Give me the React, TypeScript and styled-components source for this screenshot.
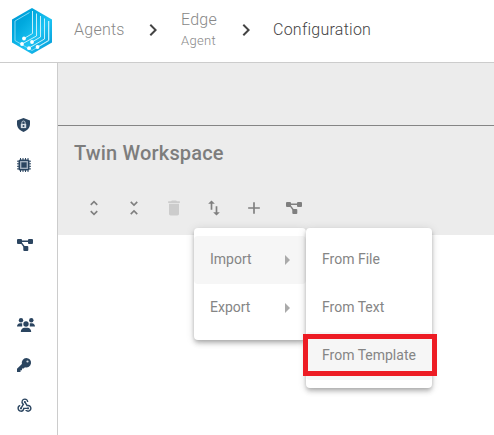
import React from "react";
import styled, { createGlobalStyle, css } from "styled-components";
import { MdAdd, MdDelete, MdImportExport, MdUnfoldLess, MdUnfoldMore, MdChevronRight, MdWebhook } from "react-icons/md";

const GlobalStyle = createGlobalStyle`
  *, *::after { box-sizing: border-box; }
  body { margin: 0; background: #fff; font-family: Roboto, sans-serif; overflow: hidden; }
  svg { display: block; flex: none; }
`;

const Page = styled.div`
  height: 435px;
  display: flex;
  flex-direction: column;
`;

const Header = styled.header`
  height: 63px;
  flex: none;
  display: flex;
  align-items: center;
  padding-left: 11px;
  border-bottom: 1px solid #ccc;
`;

const Crumb = styled.div<{ $width: number; $active?: boolean }>`
  width: ${(p) => p.$width}px;
  flex: none;
  font-size: 16px;
  font-weight: 300;
  line-height: 20px;
  letter-spacing: 0.25px;
  color: ${(p) => (p.$active ? "#444" : "#888")};
  padding-bottom: 2px;
`;

const CrumbSub = styled.div`
  font-size: 13px;
  line-height: 21px;
  letter-spacing: 0.3px;
  margin-bottom: -1px;
`;

const Separator = styled.div<{ $width: number }>`
  width: ${(p) => p.$width}px;
  padding-bottom: 2px;
  color: #444;
`;

const Logo = styled.svg`
  margin-right: 21px;
`;

const Body = styled.div`
  flex: 1;
  display: flex;
`;

const Sidebar = styled.nav`
  width: 58px;
  flex: none;
  padding-top: 42px;
  border-right: 1px solid #ccc;
  color: #2b4560;
`;

const NavItem = styled.div<{ $gapAfter?: boolean }>`
  height: 40px;
  padding-left: 16px;
  display: flex;
  align-items: center;
  margin-bottom: ${(p) => (p.$gapAfter ? 40 : 0)}px;
`;

const Main = styled.main`
  flex: 1;
  position: relative;
`;

const Banner = styled.div`
  height: 63px;
  background: #ececec;
  border-bottom: 1px solid #858585;
`;

const Workspace = styled.section`
  height: 109px;
  background: #ececec;
  padding: 15px 16px 0;
`;

const Title = styled.h1`
  margin: 0;
  height: 47px;
  font-size: 20px;
  line-height: 24px;
  font-weight: 500;
  letter-spacing: 0.17px;
  color: #7d7d7d;
`;

const Toolbar = styled.div`
  display: flex;
`;

const ToolButton = styled.div<{ $disabled?: boolean }>`
  width: 40px;
  height: 40px;
  display: flex;
  align-items: center;
  justify-content: center;
  color: ${(p) => (p.$disabled ? "#ccc" : "#7f7f7f")};
`;

const Menu = styled.div<{ $level: number }>`
  position: absolute;
  top: 165px;
  left: ${(p) => (p.$level ? 248 : 136)}px;
  width: ${(p) => (p.$level ? 126 : 112)}px;
  padding: 8px 0;
  background: #fff;
  border-radius: 4px;
  box-shadow: 0 2px 4px -1px rgba(0, 0, 0, 0.2), 0 4px 5px rgba(0, 0, 0, 0.14), 0 1px 10px rgba(0, 0, 0, 0.12);
`;

const MenuItem = styled.div<{ $active?: boolean; $marked?: boolean }>`
  height: 48px;
  padding: 0 16px;
  display: flex;
  align-items: center;
  justify-content: space-between;
  position: relative;
  border-radius: 4px;
  font-size: 14px;
  line-height: 46px;
  white-space: nowrap;
  color: #858585;
  background: ${(p) => (p.$active ? "#f6f6f6" : "#fff")};
  ${(p) =>
    p.$marked &&
    css`
      &::after {
        content: "";
        position: absolute;
        top: 2px;
        left: -3px;
        width: 134px;
        height: 42px;
        border: 5px solid #ed1c24;
      }
    `}
`;

const MenuLabel = styled.span`
  height: 48px;
`;

const Caret = styled.span`
  border: 5px solid transparent;
  border-left-color: #aaa;
  border-right-width: 0;
`;

const HexLogo = () => (
  <Logo width="42" height="48" viewBox="0 0 42 48">
    <defs>
      <linearGradient id="hex" x1="0" y1="0" x2="1" y2="1">
        <stop offset="0" stopColor="#0094d4" />
        <stop offset=".3" stopColor="#00a9de" />
        <stop offset=".6" stopColor="#1cc3f3" />
        <stop offset="1" stopColor="#0094d2" />
      </linearGradient>
    </defs>
    <path d="M21 1 41 12.5V35.5L21 47 1 35.5V12.5Z" fill="url(#hex)" />
    <path d="M18.5 5.500 4 14V33.500L21 43.500 38 33.500V14" fill="none" stroke="#8fdff6" strokeWidth=".9" />
    <g fill="none" stroke="#c4effb" strokeWidth="1">
      <path d="M21.500 4V26.500L13 31.500" />
      <path d="M25.500 6.500V29L11 37" />
      <path d="M29.500 9V30L21 35" />
      <path d="M33.500 11.500V32L18 41" />
      <path d="M37.500 14V33.500L26.500 40" />
    </g>
    <g fill="#fff">
      <circle cx="13" cy="31.500" r="1.900" />
      <circle cx="11" cy="37" r="1.900" />
      <circle cx="21" cy="35" r="1.900" />
      <circle cx="18" cy="41.200" r="1.900" />
      <circle cx="26.500" cy="40" r="1.900" />
    </g>
  </Logo>
);

const ShieldLock = () => (
  <svg width="16" height="16" viewBox="0 0 16 16">
    <path d="M7.500 1 14 3.500V7c0 3.500-2.500 6.500-6.500 8C3.500 13.500 1 10.500 1 7V3.500Z" fill="currentColor" />
    <path d="M5.900 7V5.600a1.600 1.600 0 0 1 3.200 0V7" fill="none" stroke="#c5ced8" strokeWidth="1" />
    <path d="M4.800 6.900h5.400v4.200H4.800Z" fill="#d5dce4" />
    <circle cx="7.500" cy="8.900" r="1" fill="currentColor" />
  </svg>
);

const ChipIcon = () => (
  <svg width="16" height="16" viewBox="0 0 16 16">
    <path
      d="M4.500 1V15M7 1V15M9.500 1V15M12 1V15M1 4.200H15M1 6.800H15M1 9.300H15M1 11.900H15"
      stroke="currentColor"
      strokeWidth="1"
    />
    <rect x="2.500" y="2.500" width="11" height="11" rx="1.500" fill="currentColor" />
    <rect x="4.700" y="4.700" width="6.600" height="6.600" fill="currentColor" stroke="#a9b6c5" strokeWidth="1.300" />
  </svg>
);

const NodesIcon = () => (
  <svg width="18" height="16" viewBox="0 0 18 16">
    <path d="M4 4.200H14M4 4.200 9.500 11.500" stroke="currentColor" strokeWidth="1.400" />
    <g fill="currentColor">
      <rect x="1" y="2" width="5" height="5" rx="1" />
      <rect x="12" y="2" width="5" height="5" rx="1" />
      <rect x="7.300" y="9" width="5" height="5" rx="1" />
    </g>
  </svg>
);

const KeyIcon = () => (
  <svg width="16" height="16" viewBox="0 0 16 16">
    <path
      d="M10.300 1a4.700 4.700 0 1 1-1.300 9.200L7.500 11.600H6v1.600H4.500V15H1v-3.300l4.900-4.800A4.700 4.700 0 0 1 10.300 1Z"
      fill="currentColor"
    />
    <circle cx="11.500" cy="4.500" r="1.100" fill="#d5dce4" />
  </svg>
);

const UsersIcon = () => (
  <svg width="20" height="16" viewBox="0 0 20 16" fill="currentColor">
    <circle cx="5" cy="3.200" r="2.200" />
    <circle cx="15.300" cy="3.200" r="2.200" />
    <circle cx="10" cy="7" r="2.700" />
    <path d="M1 9.500C1 7.500 2.300 6.200 4 6.200h2.200v3.300ZM19 9.500c0-2-1.300-3.300-3-3.300h-2.200v3.300ZM4.800 15c0-2.600 1.500-4.200 3.800-4.200h2.800c2.300 0 3.800 1.600 3.800 4.200Z" />
  </svg>
);

export default function App() {
  return (
    <Page>
      <GlobalStyle />
      <Header>
        <HexLogo />
        <Crumb $width={67}>Agents</Crumb>
        <Separator $width={40}><MdChevronRight size={24} /></Separator>
        <Crumb $width={53}>Edge<CrumbSub>Agent</CrumbSub></Crumb>
        <Separator $width={39}><MdChevronRight size={24} /></Separator>
        <Crumb $width={120} $active>Configuration</Crumb>
      </Header>
      <Body>
        <Sidebar>
          <NavItem><ShieldLock /></NavItem>
          <NavItem $gapAfter><ChipIcon /></NavItem>
          <NavItem $gapAfter><NodesIcon /></NavItem>
          <NavItem><UsersIcon /></NavItem>
          <NavItem><KeyIcon /></NavItem>
          <NavItem><MdWebhook size={17} /></NavItem>
        </Sidebar>
        <Main>
          <Banner />
          <Workspace>
            <Title>Twin Workspace</Title>
            <Toolbar>
              <ToolButton><MdUnfoldMore size={20} /></ToolButton>
              <ToolButton><MdUnfoldLess size={20} /></ToolButton>
              <ToolButton $disabled><MdDelete size={20} /></ToolButton>
              <ToolButton><MdImportExport size={20} /></ToolButton>
              <ToolButton><MdAdd size={20} /></ToolButton>
              <ToolButton><NodesIcon /></ToolButton>
            </Toolbar>
          </Workspace>
          <Menu $level={0}>
            <MenuItem $active><MenuLabel>Import</MenuLabel><Caret /></MenuItem>
            <MenuItem><MenuLabel>Export</MenuLabel><Caret /></MenuItem>
          </Menu>
          <Menu $level={1}>
            <MenuItem><MenuLabel>From File</MenuLabel></MenuItem>
            <MenuItem><MenuLabel>From Text</MenuLabel></MenuItem>
            <MenuItem $active $marked><MenuLabel>From Template</MenuLabel></MenuItem>
          </Menu>
        </Main>
      </Body>
    </Page>
  );
}
